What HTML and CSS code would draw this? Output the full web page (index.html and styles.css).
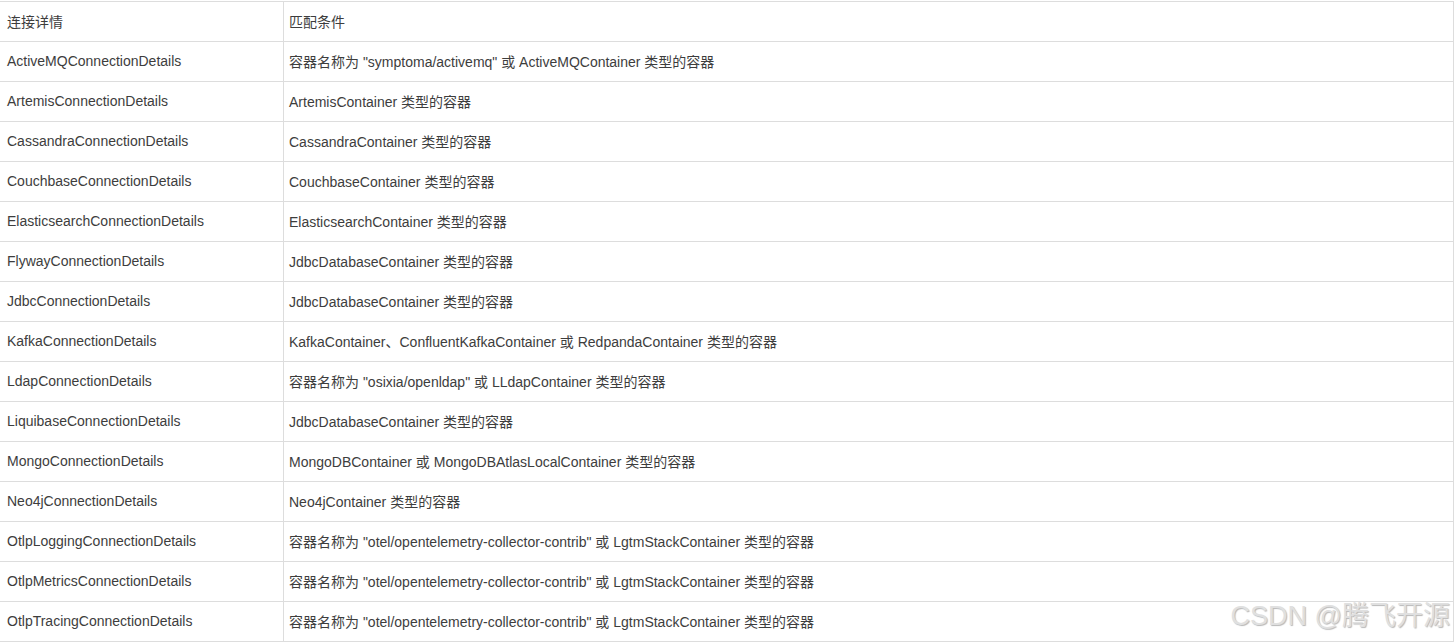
FILE: index.html
```html
<!DOCTYPE html>
<html lang="zh-CN">
<head>
    <meta charset="UTF-8">
    <meta name="viewport" content="width=device-width, initial-scale=1.0">
    <title>连接详情</title>
    <link rel="stylesheet" href="styles.css">
</head>
<body>

    <div class="page">
        <table class="details-table">
            <thead>
                <tr>
                    <td class="col-name">连接详情</td>
                    <td>匹配条件</td>
                </tr>
            </thead>
            <tbody>
                <tr><td>ActiveMQConnectionDetails</td><td>容器名称为 "symptoma/activemq" 或 ActiveMQContainer 类型的容器</td></tr>
                <tr><td>ArtemisConnectionDetails</td><td>ArtemisContainer 类型的容器</td></tr>
                <tr><td>CassandraConnectionDetails</td><td>CassandraContainer 类型的容器</td></tr>
                <tr><td>CouchbaseConnectionDetails</td><td>CouchbaseContainer 类型的容器</td></tr>
                <tr><td>ElasticsearchConnectionDetails</td><td>ElasticsearchContainer 类型的容器</td></tr>
                <tr><td>FlywayConnectionDetails</td><td>JdbcDatabaseContainer 类型的容器</td></tr>
                <tr><td>JdbcConnectionDetails</td><td>JdbcDatabaseContainer 类型的容器</td></tr>
                <tr><td>KafkaConnectionDetails</td><td>KafkaContainer、ConfluentKafkaContainer 或 RedpandaContainer 类型的容器</td></tr>
                <tr><td>LdapConnectionDetails</td><td>容器名称为 "osixia/openldap" 或 LLdapContainer 类型的容器</td></tr>
                <tr><td>LiquibaseConnectionDetails</td><td>JdbcDatabaseContainer 类型的容器</td></tr>
                <tr><td>MongoConnectionDetails</td><td>MongoDBContainer 或 MongoDBAtlasLocalContainer 类型的容器</td></tr>
                <tr><td>Neo4jConnectionDetails</td><td>Neo4jContainer 类型的容器</td></tr>
                <tr><td>OtlpLoggingConnectionDetails</td><td>容器名称为 "otel/opentelemetry-collector-contrib" 或 LgtmStackContainer 类型的容器</td></tr>
                <tr><td>OtlpMetricsConnectionDetails</td><td>容器名称为 "otel/opentelemetry-collector-contrib" 或 LgtmStackContainer 类型的容器</td></tr>
                <tr><td>OtlpTracingConnectionDetails</td><td>容器名称为 "otel/opentelemetry-collector-contrib" 或 LgtmStackContainer 类型的容器</td></tr>
            </tbody>
        </table>
        <div class="watermark">CSDN @腾飞开源</div>
    </div>

</body>
</html>
```

FILE: styles.css
```css
body {
    margin: 0;
    font-family: 'Liberation Sans', 'Noto Sans CJK SC', sans-serif;
    background-color: #ffffff;
    overflow: hidden;
}
.page {
    position: relative;
    height: 643px;
    padding-top: 1px;
    box-sizing: border-box;
}
.details-table {
    width: 1455px;
    margin-left: -1px;
    border-collapse: collapse;
    font-size: 14px;
    color: #3d3d3d;
}
.details-table td {
    border: 1px solid #dddddd;
    height: 39px;
    padding: 0 6px 2px 7px;
    vertical-align: middle;
    box-sizing: border-box;
}
.details-table tr {
    height: 40px;
}
.col-name {
    width: 284px;
}
.details-table tr td:nth-child(2) {
    padding-left: 5px;
}
.watermark {
    position: absolute;
    right: 6px;
    bottom: 10px;
    font-size: 27px;
    color: #e0e0e0;
    text-shadow: 1px 1px 1px #b8b8b8;
}
```
